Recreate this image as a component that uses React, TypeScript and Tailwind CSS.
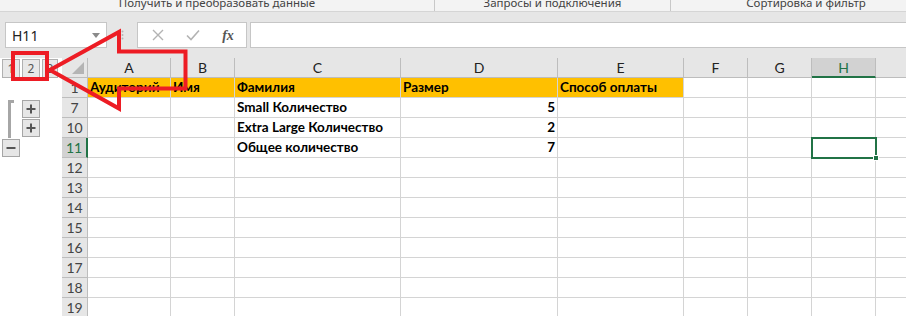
import React from 'react';

const cols = [
  { key: 'A', w: 'w-[83px]' },
  { key: 'B', w: 'w-[64px]' },
  { key: 'C', w: 'w-[166px]' },
  { key: 'D', w: 'w-[157px]' },
  { key: 'E', w: 'w-[126px]' },
  { key: 'F', w: 'w-[64px]' },
  { key: 'G', w: 'w-[64px]' },
  { key: 'H', w: 'w-[64px]' },
  { key: '', w: 'w-[40px]' },
];

interface Row {
  n: string;
  cells?: string[];
  yellow?: boolean;
  selected?: boolean;
}

const rows: Row[] = [
  { n: '1', cells: ['Аудиторий', 'Имя', 'Фамилия', 'Размер', 'Способ оплаты'], yellow: true },
  { n: '7', cells: ['', '', 'Small Количество', '5', ''] },
  { n: '10', cells: ['', '', 'Extra Large Количество', '2', ''] },
  { n: '11', cells: ['', '', 'Общее количество', '7', ''], selected: true },
  { n: '12' },
  { n: '13' },
  { n: '14' },
  { n: '15' },
  { n: '16' },
  { n: '17' },
  { n: '18' },
  { n: '19' },
];

const OutlineBtn = ({ children }: { children: React.ReactNode }) => (
  <div className="flex h-[18px] w-[18px] items-center justify-center border border-[#a6a6a6] bg-[#e6e6e6] text-[#555]">
    {children}
  </div>
);

const Plus = () => (
  <svg width="10" height="10" viewBox="0 0 10 10">
    <path d="M5 0.5v9M0.5 5h9" stroke="#555" strokeWidth="2" />
  </svg>
);

const Minus = () => (
  <svg width="10" height="10" viewBox="0 0 10 10">
    <path d="M0.5 5h9" stroke="#555" strokeWidth="2" />
  </svg>
);

const Outline = () => (
  <div className="flex w-[62px] shrink-0 flex-col bg-white">
    <div className="flex h-[20px] items-start gap-[2px] pl-[2px] pt-[1px] font-['Noto_Sans',sans-serif] text-[12px] text-[#555]">
      {['1', '2', '3'].map((l, i) => (
        <div
          key={l}
          className={`flex h-[19px] items-center justify-center border border-[#b0b0b0] bg-[#e8e8e8] ${i === 2 ? 'w-[16px]' : 'w-[18px]'}`}
        >
          {l}
        </div>
      ))}
    </div>
    <div className="h-[20px]" />
    <div className="flex h-[20px] items-start pt-[2px]">
      <div className="ml-[8px] h-[18px] w-[6px] border-l-[3px] border-t-[3px] border-[#a6a6a6]" />
      <div className="ml-[8px]">
        <OutlineBtn>
          <Plus />
        </OutlineBtn>
      </div>
    </div>
    <div className="flex h-[20px] items-start">
      <div className="ml-[8px] h-[20px] w-[6px] border-l-[3px] border-[#a6a6a6]" />
      <div className="ml-[8px] mt-[1px]">
        <OutlineBtn>
          <Plus />
        </OutlineBtn>
      </div>
    </div>
    <div className="flex h-[20px] items-start pl-[2px] pt-[1px]">
      <OutlineBtn>
        <Minus />
      </OutlineBtn>
    </div>
  </div>
);

const Sheet = () => (
  <div className="flex flex-col font-['Lato',sans-serif]">
    <div className="flex h-[20px] bg-[#e6e6e6]">
      <div className="relative w-[26px] shrink-0 border-b border-r border-[#bdbdbd]">
        <svg className="absolute bottom-[3px] right-[3px]" width="12" height="12" viewBox="0 0 12 12">
          <path d="M12 0V12H0Z" fill="#b4b4b4" />
        </svg>
      </div>
      {cols.map((c) =>
        c.key === 'H' ? (
          <div
            key={c.key}
            className={`${c.w} flex shrink-0 items-center justify-center border-b-2 border-r border-b-[#217346] border-r-[#bdbdbd] bg-[#d2d2d2] text-[14px] text-[#217346]`}
          >
            {c.key}
          </div>
        ) : (
          <div
            key={c.key || 'x'}
            className={`${c.w} flex shrink-0 items-center justify-center border-b border-r border-[#bdbdbd] text-[14px] text-[#222]`}
          >
            {c.key}
          </div>
        ),
      )}
    </div>
    {rows.map((r) => (
      <div key={r.n} className="flex h-[20px]">
        <div
          className={`flex w-[26px] shrink-0 items-center justify-center border-b text-[14px] ${
            r.selected
              ? 'border-r-2 border-b-[#bdbdbd] border-r-[#217346] bg-[#d2d2d2] text-[#217346]'
              : 'border-r border-[#bdbdbd] bg-[#e6e6e6] text-[#444]'
          }`}
        >
          {r.n}
        </div>
        {cols.map((c, ci) => {
          const txt = r.cells?.[ci] ?? '';
          const yellow = r.yellow && ci < 5;
          const num = ci === 3 && !r.yellow && txt !== '';
          const sel = r.selected && c.key === 'H';
          return (
            <div
              key={ci}
              className={`${c.w} relative flex shrink-0 items-center border-b border-r border-[#d4d4d4] ${
                yellow ? 'bg-[#ffc000]' : 'bg-white'
              } ${sel ? 'z-10' : ''}`}
            >
              <span
                className={`block w-full overflow-hidden whitespace-nowrap px-[2px] text-[13.5px] font-bold text-black ${
                  num ? 'text-right' : ''
                }`}
              >
                {txt}
              </span>
              {sel && (
                <div className="absolute -left-[1px] -top-[1px] h-[22px] w-[66px] border-2 border-[#217346]">
                  <div className="absolute -bottom-[4px] -right-[4px] h-[6px] w-[6px] border border-white bg-[#217346]" />
                </div>
              )}
            </div>
          );
        })}
      </div>
    ))}
  </div>
);

export default function App() {
  return (
    <div className="relative h-[316px] w-[906px] overflow-hidden bg-white font-['Noto_Sans',sans-serif]">
      <div className="flex h-[12px] overflow-hidden border-b border-[#d5d5d5] bg-[#f3f3f3] text-[11.5px] leading-[16px] text-[#444]">
        <div className="-mt-[5px] w-[435px] shrink-0 border-r border-[#c8c8c8] text-center">Получить и преобразовать данные</div>
        <div className="-mt-[5px] w-[236px] shrink-0 border-r border-[#c8c8c8] text-center">Запросы и подключения</div>
        <div className="-mt-[5px] w-[270px] shrink-0 text-center">Сортировка и фильтр</div>
      </div>
      <div className="flex h-[46px] items-start bg-[#e6e6e6] pl-[5px] pt-[10px]">
        <div className="flex h-[26px] w-[102px] shrink-0 items-center justify-between border border-[#c6c6c6] bg-white pl-[6px] pr-[6px] text-[14px] text-[#222]">
          <span>H11</span>
          <svg width="8" height="5" viewBox="0 0 8 5">
            <path d="M0 0h8L4 5z" fill="#8a8a8a" />
          </svg>
        </div>
        <div className="flex h-[26px] w-[30px] shrink-0 items-center justify-center">
          <svg width="3" height="10" viewBox="0 0 3 10">
            <circle cx="1.5" cy="1.5" r="1" fill="#b5b5b5" />
            <circle cx="1.5" cy="5" r="1" fill="#b5b5b5" />
            <circle cx="1.5" cy="8.5" r="1" fill="#b5b5b5" />
          </svg>
        </div>
        <div className="flex h-[26px] w-[110px] shrink-0 items-center border border-[#c6c6c6] bg-white">
          <div className="flex w-[36px] justify-center pl-[4px]">
            <svg width="12" height="12" viewBox="0 0 12 12">
              <path d="M1 1l10 10M11 1L1 11" stroke="#b3b3b3" strokeWidth="1.4" />
            </svg>
          </div>
          <div className="flex w-[36px] justify-center pl-[2px]">
            <svg width="14" height="12" viewBox="0 0 14 12">
              <path d="M1 6.5l4 4L13 1.5" stroke="#b3b3b3" strokeWidth="1.6" fill="none" />
            </svg>
          </div>
          <div className="flex w-[36px] justify-center font-['Liberation_Serif',serif] text-[14px] font-bold italic text-[#555]">
            fx
          </div>
        </div>
        <div className="ml-[3px] h-[26px] flex-1 border border-r-0 border-[#c6c6c6] bg-white" />
      </div>
      <div className="flex">
        <Outline />
        <Sheet />
      </div>
      <svg className="pointer-events-none absolute left-0 top-0" width="906" height="316" viewBox="0 0 906 316">
        <rect x="13" y="53" width="34" height="26" fill="none" stroke="#ed1c24" strokeWidth="4" />
        <path
          d="M50 70 L119 32 L119 51.5 L185.5 51.5 L185.5 88.5 L119 88.5 L119 108.5 Z"
          fill="none"
          stroke="#ed1c24"
          strokeWidth="4"
          strokeLinejoin="miter"
        />
      </svg>
    </div>
  );
}
